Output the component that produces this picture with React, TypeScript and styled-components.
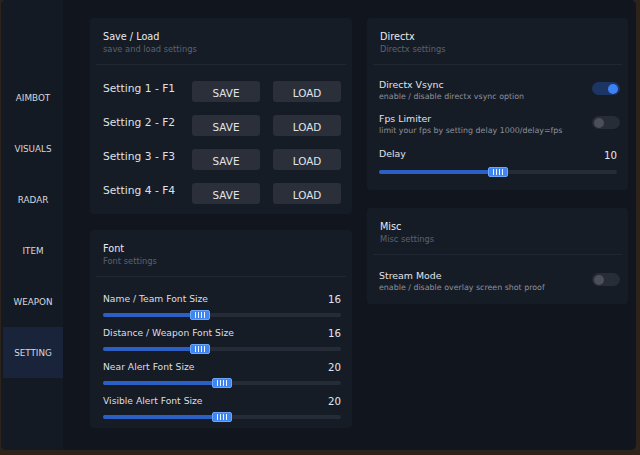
import React from "react";
import styled, { createGlobalStyle } from "styled-components";

const GlobalStyle = createGlobalStyle`
  html, body {
    margin: 0;
    padding: 0;
    background: #2e231a;
  }
  body {
    width: 640px;
    height: 455px;
    overflow: hidden;
    font-family: "DejaVu Sans", "Liberation Sans", sans-serif;
  }
`;

const Window = styled.div`
  display: flex;
  width: 635px;
  height: 450px;
  margin-left: 1px;
  background: #11161e;
  border-radius: 5px;
  overflow: hidden;
`;

const Sidebar = styled.nav`
  width: 62px;
  flex-shrink: 0;
  display: flex;
  flex-direction: column;
  padding-top: 72px;
  background: #141a23;
`;

const NavItem = styled.div<{ $active?: boolean }>`
  height: 51px;
  margin-left: 2px;
  display: flex;
  align-items: center;
  justify-content: center;
  font-size: 8.8px;
  color: #d4d7dc;
  background: ${({ $active }) => ($active ? "#19233a" : "transparent")};
`;

const Main = styled.main`
  flex: 1;
  display: grid;
  grid-template-columns: 262px 261px;
  column-gap: 15px;
  align-items: start;
  padding: 18px 0 0 27px;
`;

const Column = styled.div<{ $gap: number }>`
  display: flex;
  flex-direction: column;
  gap: ${({ $gap }) => $gap}px;
`;

const Card = styled.section`
  background: #161c26;
  border-radius: 4px;
`;

const CardHeader = styled.header`
  margin: 0 6px;
  padding: 12px 7px 9px;
  border-bottom: 1px solid #212732;
`;

const Title = styled.div`
  font-size: 9.7px;
  line-height: 12px;
  padding-top: 1px;
  color: #e8eaee;
`;

const Subtitle = styled.div`
  font-size: 8.3px;
  line-height: 12px;
  color: #5b6270;
`;

const SaveBody = styled.div`
  display: flex;
  flex-direction: column;
  gap: 13px;
  padding: 16px 11px 10px 13px;
`;

const SaveRow = styled.div`
  display: grid;
  grid-template-columns: 76px 68px 68px;
  column-gap: 13px;
  align-items: start;
`;

const SaveLabel = styled.span`
  font-size: 10.7px;
  line-height: 14px;
  padding-top: 1px;
  color: #dfe2e6;
  white-space: nowrap;
`;

const Button = styled.button`
  height: 21px;
  border: none;
  border-radius: 3px;
  background: #2a2f39;
  color: #e2e4e8;
  font-family: inherit;
  font-size: 10.4px;
  padding: 2px 0 0;
`;

const SliderList = styled.div`
  display: flex;
  flex-direction: column;
  gap: 5px;
  padding: 14px 11px 6px 13px;
`;

const SliderRow = styled.div`
  display: flex;
  flex-direction: column;
  gap: 5px;
`;

const LabelLine = styled.div`
  display: flex;
  justify-content: space-between;
  align-items: center;
  height: 14px;
`;

const SliderLabel = styled.span`
  font-size: 9.2px;
  color: #dcdfe4;
`;

const SliderValue = styled.span`
  font-size: 10.2px;
  color: #e4e6ea;
  padding-top: 2px;
`;

const Track = styled.div`
  position: relative;
  height: 10px;
  display: flex;
  align-items: center;
`;

const Rail = styled.div`
  width: 100%;
  height: 4px;
  border-radius: 2px;
  background: #262c37;
  overflow: hidden;
`;

const Fill = styled.div`
  height: 100%;
  background: #2c5fc4;
`;

const Thumb = styled.div`
  position: absolute;
  top: 0;
  width: 20px;
  height: 10px;
  box-sizing: border-box;
  border-radius: 2px;
  background: #3f86f2;
  border: 1px solid #6aa6fa;
  display: flex;
  align-items: center;
  justify-content: center;
  gap: 2px;
`;

const Grip = styled.span`
  width: 1px;
  height: 6px;
  background: #eef4ff;
`;

const Slider = ({ value, max }: { value: number; max: number }) => {
  const ratio = value / max;
  return (
    <Track>
      <Rail>
        <Fill style={{ width: `calc(${ratio} * (100% - 20px) + 10px)` }} />
      </Rail>
      <Thumb style={{ left: `calc(${ratio} * (100% - 20px))` }}>
        <Grip />
        <Grip />
        <Grip />
        <Grip />
      </Thumb>
    </Track>
  );
};

const OptionBody = styled.div<{ $bottom: number; $top: number }>`
  display: flex;
  flex-direction: column;
  padding: ${({ $top, $bottom }) => `${$top}px 8px ${$bottom}px 12px`};
`;

const ToggleRow = styled.div`
  display: flex;
  justify-content: space-between;
  align-items: flex-start;
  height: 34px;
`;

const OptionLabel = styled.div`
  font-size: 9.4px;
  line-height: 12px;
  color: #e0e3e8;
`;

const OptionDesc = styled.div`
  font-size: 7.9px;
  line-height: 12px;
  color: #8a909b;
`;

const Switch = styled.div<{ $on?: boolean }>`
  width: 28px;
  height: 13px;
  margin-top: 3px;
  border-radius: 7px;
  background: ${({ $on }) => ($on ? "#1d3563" : "#272c36")};
  position: relative;

  &::after {
    content: "";
    position: absolute;
    top: 1.5px;
    left: ${({ $on }) => ($on ? "16px" : "2px")};
    width: 10px;
    height: 10px;
    border-radius: 50%;
    background: ${({ $on }) => ($on ? "#3b82f6" : "#4a4f5a")};
  }
`;

const DelayBlock = styled.div`
  display: flex;
  flex-direction: column;
  gap: 6px;
  margin-right: 3px;
`;

const navItems = ["AIMBOT", "VISUALS", "RADAR", "ITEM", "WEAPON", "SETTING"];

const fontSliders = [
  { label: "Name / Team Font Size", value: 16 },
  { label: "Distance / Weapon Font Size", value: 16 },
  { label: "Near Alert Font Size", value: 20 },
  { label: "Visible Alert Font Size", value: 20 },
];

export default function App() {
  return (
    <>
      <GlobalStyle />
      <Window>
        <Sidebar>
          {navItems.map((item) => (
            <NavItem key={item} $active={item === "SETTING"}>
              {item}
            </NavItem>
          ))}
        </Sidebar>
        <Main>
          <Column $gap={16}>
            <Card>
              <CardHeader>
                <Title>Save / Load</Title>
                <Subtitle>save and load settings</Subtitle>
              </CardHeader>
              <SaveBody>
                {[1, 2, 3, 4].map((n) => (
                  <SaveRow key={n}>
                    <SaveLabel>
                      Setting {n} - F{n}
                    </SaveLabel>
                    <Button>SAVE</Button>
                    <Button>LOAD</Button>
                  </SaveRow>
                ))}
              </SaveBody>
            </Card>
            <Card>
              <CardHeader>
                <Title>Font</Title>
                <Subtitle>Font settings</Subtitle>
              </CardHeader>
              <SliderList>
                {fontSliders.map((s) => (
                  <SliderRow key={s.label}>
                    <LabelLine>
                      <SliderLabel>{s.label}</SliderLabel>
                      <SliderValue>{s.value}</SliderValue>
                    </LabelLine>
                    <Slider value={s.value} max={40} />
                  </SliderRow>
                ))}
              </SliderList>
            </Card>
          </Column>
          <Column $gap={18}>
            <Card>
              <CardHeader>
                <Title>Directx</Title>
                <Subtitle>Directx settings</Subtitle>
              </CardHeader>
              <OptionBody $top={14} $bottom={13}>
                <ToggleRow>
                  <div>
                    <OptionLabel>Directx Vsync</OptionLabel>
                    <OptionDesc>enable / disable directx vsync option</OptionDesc>
                  </div>
                  <Switch $on />
                </ToggleRow>
                <ToggleRow>
                  <div>
                    <OptionLabel>Fps Limiter</OptionLabel>
                    <OptionDesc>limit your fps by setting delay 1000/delay=fps</OptionDesc>
                  </div>
                  <Switch />
                </ToggleRow>
                <DelayBlock>
                  <LabelLine>
                    <OptionLabel>Delay</OptionLabel>
                    <SliderValue>10</SliderValue>
                  </LabelLine>
                  <Slider value={10} max={20} />
                </DelayBlock>
              </OptionBody>
            </Card>
            <Card>
              <CardHeader>
                <Title>Misc</Title>
                <Subtitle>Misc settings</Subtitle>
              </CardHeader>
              <OptionBody $top={15} $bottom={0}>
                <ToggleRow>
                  <div>
                    <OptionLabel>Stream Mode</OptionLabel>
                    <OptionDesc>enable / disable overlay screen shot proof</OptionDesc>
                  </div>
                  <Switch />
                </ToggleRow>
              </OptionBody>
            </Card>
          </Column>
        </Main>
      </Window>
    </>
  );
}
